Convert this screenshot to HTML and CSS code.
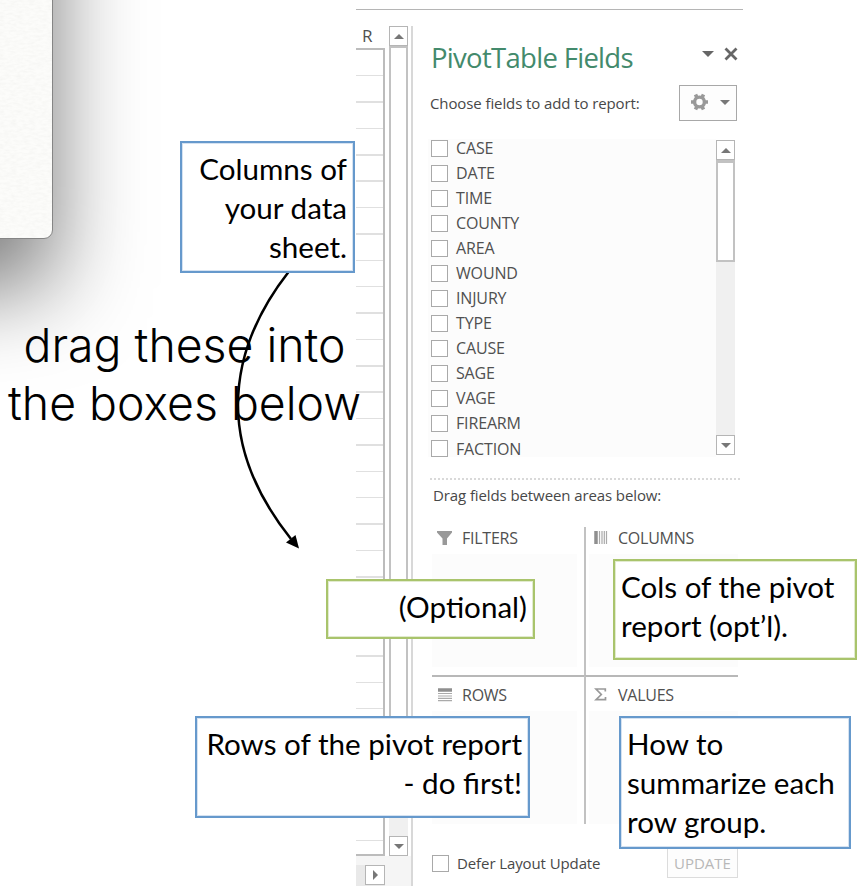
FILE: index.html
```html
<!DOCTYPE html>
<html lang="en">
<head>
<meta charset="utf-8">
<title>PivotTable Fields</title>
<link rel="stylesheet" href="styles.css">
</head>
<body>
<main class="slide">
  <div class="card">
    <svg class="grain" width="460" height="260" aria-hidden="true">
      <filter id="paper"><feTurbulence type="fractalNoise" baseFrequency=".16 .4" numOctaves="3" seed="4"/><feColorMatrix values="0 0 0 0 .45  0 0 0 0 .45  0 0 0 0 .42  .16 0 0 0 -.055"/></filter>
      <rect width="460" height="260" filter="url(#paper)"/>
    </svg>
  </div>

  <section class="excel">
    <div class="sheet">
      <div class="col-head">R</div>
      <div class="cells"></div>
      <div class="hscroll"><span class="sb-btn"><i class="tri right"></i></span></div>
    </div>
    <div class="vscroll">
      <span class="sb-btn"><i class="tri up"></i></span>
      <div class="thumb"></div>
      <div class="track"></div>
      <span class="sb-btn"><i class="tri down"></i></span>
    </div>
    <aside class="pane">
      <header class="pane-head">
        <h1>PivotTable Fields</h1>
        <svg width="38" height="16" viewBox="0 0 38 16"><path d="M0 5h12L6 11z" fill="#666"/><path d="M23.500 2.500l11 11M34.500 2.500l-11 11" stroke="#666" stroke-width="2.800"/></svg>
      </header>
      <div class="choose">
        <span class="label">Choose fields to add to report:</span>
        <button class="gear">
          <svg width="42" height="20" viewBox="0 0 42 20"><g fill="none" stroke="#999"><circle cx="10.500" cy="9" r="4.900" stroke-width="3.400"/><path d="M2 9h3M16 9h3M6.500 1.500l1.200 2.500M14.500 1.500l-1.200 2.500M6.500 16.500l1.200-2.500M14.500 16.500l-1.200-2.500" stroke-width="3.600"/></g><path d="M31 7h10l-5 5z" fill="#777"/></svg>
        </button>
      </div>
      <div class="fields">
        <ul>
          <li><i class="box"></i>CASE</li>
          <li><i class="box"></i>DATE</li>
          <li><i class="box"></i>TIME</li>
          <li><i class="box"></i>COUNTY</li>
          <li><i class="box"></i>AREA</li>
          <li><i class="box"></i>WOUND</li>
          <li><i class="box"></i>INJURY</li>
          <li><i class="box"></i>TYPE</li>
          <li><i class="box"></i>CAUSE</li>
          <li><i class="box"></i>SAGE</li>
          <li><i class="box"></i>VAGE</li>
          <li><i class="box"></i>FIREARM</li>
          <li><i class="box"></i>FACTION</li>
        </ul>
        <div class="list-scroll">
          <span class="sb-btn"><i class="tri up"></i></span>
          <div class="list-thumb"></div>
          <div class="track"></div>
          <span class="sb-btn"><i class="tri down"></i></span>
        </div>
      </div>
      <div class="drag"><span class="label">Drag fields between areas below:</span></div>
      <div class="areas">
        <div class="area">
          <h2><svg width="16" height="16" viewBox="0 0 16 16"><path d="M0 1h15v1.500L10 8.500V15H5.500V8.500L0 2.500z" fill="#999"/></svg>FILTERS</h2>
          <div class="drop"></div>
        </div>
        <div class="area right-col">
          <h2><svg width="14" height="16" viewBox="0 0 14 16"><path d="M2 1v13" stroke="#8f8f8f" stroke-width="3.500"/><path d="M5.500 1v13M8 1v13M10.300 1v13M12.500 1v13" stroke="#aaa" stroke-width="1.200"/></svg>COLUMNS</h2>
          <div class="drop"></div>
        </div>
        <div class="area low">
          <h2><svg width="16" height="16" viewBox="0 0 16 16"><path d="M1 3h14" stroke="#8f8f8f" stroke-width="3.500"/><path d="M1 6.500h14M1 9h14M1 11.300h14M1 13.700h14" stroke="#aaa" stroke-width="1.200"/></svg>ROWS</h2>
          <div class="drop"></div>
        </div>
        <div class="area low right-col">
          <h2><svg width="14" height="16" viewBox="0 0 14 16"><path d="M11.300 4.500V2H2L7.300 7.500L2 12.700H11.500V10" fill="none" stroke="#999" stroke-width="1.700"/></svg>VALUES</h2>
          <div class="drop"></div>
        </div>
      </div>
      <footer class="defer">
        <i class="box"></i><span class="label">Defer Layout Update</span>
        <button class="update">UPDATE</button>
      </footer>
    </aside>
  </section>

  <p class="headline">drag these into<br>the boxes below</p>

  <svg class="arrow" width="80" height="290" viewBox="230 266 80 290"><path d="M288.500 272C262 306 238 350 238 405C238 455 260 500 291 539" fill="none" stroke="#000" stroke-width="2.500"/><path d="M299 548.500L295.500 535L286 542.500z"/></svg>

  <div class="note blue n-columns">Columns of<br>your data<br>sheet.</div>
  <div class="note green n-optional">(Optional)</div>
  <div class="note green n-cols">Cols of the pivot<br>report (opt’l).</div>
  <div class="note blue n-rows">Rows of the pivot report<br>- do first!</div>
  <div class="note blue n-values">How to<br>summarize each<br>row group.</div>
</main>
</body>
</html>
```
FILE: styles.css
```css
* { box-sizing: border-box; }
body { margin: 0; background: #fff; }
.slide { position: relative; width: 860px; height: 892px; overflow: hidden; }

.card {
  position: absolute; left: -400px; top: -400px; width: 453px; height: 639px;
  border-radius: 9px; background: #fcfcfa;
  border: 1px solid #858585; box-shadow: 0 50px 90px rgba(0, 0, 0, .53);
}
.grain { position: absolute; right: 0; bottom: 0; border-radius: 0 0 8px 0; }

.excel {
  display: flex; margin-left: 356px; width: 387px; height: 886px;
  font-family: "Open Sans", "Noto Sans", sans-serif; color: #505050;
  position: relative; padding-top: 26px;
}
.excel::before { content: ""; position: absolute; left: 0; right: 0; top: 9px; height: 1px; background: #b5b5b5; }

.sheet { width: 29px; display: flex; flex-direction: column; }
.col-head { height: 22px; padding-left: 6px; font-size: 17px; line-height: 20px; }
.cells {
  height: 808px; border: solid #bcbcbc; border-width: 2px 2px 2px 0;
  background: repeating-linear-gradient(to bottom, transparent 0, transparent 24.880px, #e0e0e0 24.880px, #e0e0e0 26.380px);
}
.hscroll { flex: 1; background: #e9e9e9; border-top: 9px solid #f5f5f5; padding-left: 9px; }
.vscroll { width: 28px; display: flex; flex-direction: column; padding: 0 3px 30px 4px; border-right: 2px solid #d8d8d8; background: linear-gradient(#f5f5f5, #f5f5f5) bottom / 100% 30px no-repeat; }
.sb-btn { display: flex; align-items: center; justify-content: center; width: 100%; height: 20px; flex: none; background: #fff; border: 1px solid #b5b5b5; }
.hscroll .sb-btn { width: 20px; }
.tri { width: 0; height: 0; border: 5px solid transparent; }
.tri.up { border-top: 0; border-bottom: 5px solid #777; }
.tri.down { border-bottom: 0; border-top: 5px solid #777; }
.tri.right { border-right: 0; border-left: 5px solid #777; }
.thumb { height: 720px; background: #fff; border: 2px solid #c2c2c2; }
.track { flex: 1; background: #f0f0f0; }

.pane { flex: 1; padding-left: 17px; display: flex; flex-direction: column; }
.pane-head { display: flex; height: 56px; padding: 7px 3px 0 1px; justify-content: space-between; }
.pane-head svg { margin-top: 13px; }
h1 { margin: 0; font-size: 27.500px; font-weight: 400; letter-spacing: -.7px; line-height: 49px; color: #438a6c; white-space: nowrap; }
.choose { display: flex; justify-content: space-between; height: 57px; padding: 3px 6px 0 0; }
.label { font-size: 15px; letter-spacing: -.1px; white-space: nowrap; color: #484848; }
.choose .label { line-height: 37px; }
.gear { width: 58px; height: 36px; padding: 0 0 0 4px; display: flex; align-items: center; justify-content: center; background: #fdfdfd; border: 1px solid #a8a8a8; }

.fields { display: flex; height: 318px; margin-left: -2px; }
ul { list-style: none; margin: 0; padding: 0 0 0 3px; width: 288px; height: 318px; background: #fcfcfc; }
li { display: flex; align-items: center; gap: 8px; height: 25.050px; font-size: 16px; line-height: 18px; letter-spacing: -.15px; }
li:first-child { height: 18px; margin-bottom: 3.500px; }
.box { width: 17px; height: 17px; flex: none; border: 1px solid #a9a9a9; background: #fff; }
.list-scroll { width: 19px; display: flex; flex-direction: column; padding: 1px 0 2px; }
.list-thumb { height: 102px; background: #fff; border: 2px solid #c2c2c2; border-top-width: 3px; }
.drag { margin-top: 21px; height: 49px; padding-left: 3px; border-top: 2px dotted #d9d9d9; margin-right: 3px; }
.drag .label { line-height: 31px; }

.areas { display: grid; grid-template-columns: 152px 154px; grid-template-rows: 148px 149px; margin-left: 2px; width: 306px; height: 297px; }
.area { padding-right: 7px; }
.right-col { border-left: 2px solid #c2c2c2; padding: 0 0 0 3px; }
.low { border-top: 2px solid #b8b8b8; border-left-color: #c2c2c2; }
h2 { display: flex; align-items: center; gap: 9px; height: 27px; margin: 0; padding: 0 0 5px 5px; font-size: 16px; font-weight: 400; line-height: 22px; letter-spacing: -.25px; }
.right-col h2 { gap: 10px; }
.low h2 { height: 34px; padding: 2px 0 0 5px; }
.drop { height: 113px; background: #fcfcfc; }
.defer { display: flex; align-items: center; height: 30px; margin: 24px 5px 0 2px; gap: 8px; }
.update { margin-left: auto; width: 71px; height: 30px; padding: 0; border: 1px solid #dcdcdc; background: #fdfdfd; color: #b8b8b8; font: 15px "Open Sans", sans-serif; }

.headline { position: absolute; left: 0; top: 316px; width: 369px; margin: 0; text-align: center; font: 300 46.400px/58px Inter, sans-serif; color: #000; white-space: nowrap; }
.arrow { position: absolute; left: 230px; top: 266px; }
.note { position: absolute; background: #fff; color: #000; font: 29.600px/39px Lato, sans-serif; white-space: nowrap; padding: 6px 6px; }
.blue { border: 2px solid #6699cc; box-shadow: inset 0 0 0 1px #d5e2f1; }
.green { border: 2px solid #a9c46c; box-shadow: inset 0 0 0 1px #e2ebcf; }
.n-columns { left: 180px; top: 141px; width: 175px; height: 132px; text-align: right; }
.n-optional { left: 326px; top: 579px; width: 209px; height: 60px; text-align: right; }
.n-cols { left: 613px; top: 559px; width: 244px; height: 101px; }
.n-rows { left: 195px; top: 716px; width: 335px; height: 102px; text-align: right; }
.n-values { left: 619px; top: 716px; width: 232px; height: 133px; }
```
